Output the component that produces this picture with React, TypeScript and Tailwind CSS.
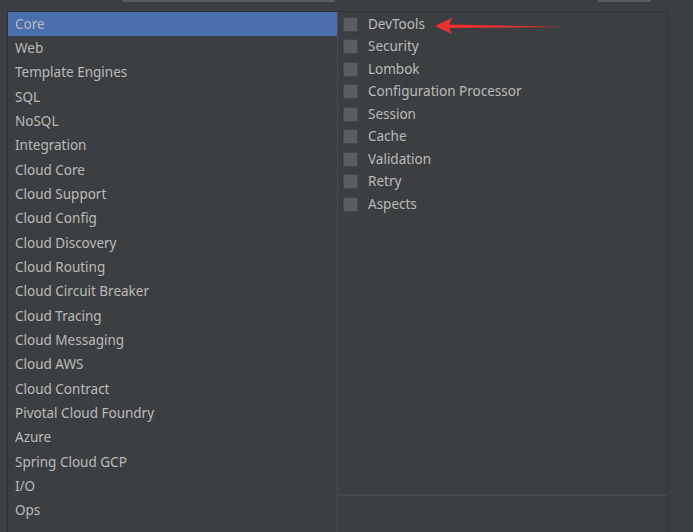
import React from "react";

const categories = [
  "Core",
  "Web",
  "Template Engines",
  "SQL",
  "NoSQL",
  "Integration",
  "Cloud Core",
  "Cloud Support",
  "Cloud Config",
  "Cloud Discovery",
  "Cloud Routing",
  "Cloud Circuit Breaker",
  "Cloud Tracing",
  "Cloud Messaging",
  "Cloud AWS",
  "Cloud Contract",
  "Pivotal Cloud Foundry",
  "Azure",
  "Spring Cloud GCP",
  "I/O",
  "Ops",
];

const deps = [
  "DevTools",
  "Security",
  "Lombok",
  "Configuration Processor",
  "Session",
  "Cache",
  "Validation",
  "Retry",
  "Aspects",
];

const App = () => {
  return (
    <main
      className="relative w-[693px] h-[532px] overflow-hidden bg-[#3c3f41] text-[#bbbbbb] text-[13.5px]"
      style={{ fontFamily: '"Noto Sans", "Open Sans", sans-serif' }}
    >
      {/* bottom edges of the controls above */}
      <div className="flex h-[11px]">
        <div className="ml-[122px] w-[213px] h-[2px] bg-[#5a5c5e]" />
        <div className="ml-[263px] w-[53px] h-[2px] bg-[#5a5c5e]" />
      </div>

      <div className="flex ml-[7px] h-[521px]">
        {/* categories */}
        <ul className="w-[330px] border-l border-t border-[#2e3032]">
          {categories.map((c, i) => (
            <li
              key={c}
              className={
                "h-[24.35px] pl-[7px] pb-[1px] flex items-center " +
                (i === 0 ? "bg-[#4b6eaf]" : "")
              }
            >
              {c}
            </li>
          ))}
        </ul>

        {/* dependencies */}
        <div className="w-[331px] flex flex-col border-l border-r border-t border-l-[#4a4d4f] border-r-[#313335] border-t-[#313335]">
          <div className="flex-1 pl-[5px] pt-[1px]">
            {deps.map((d) => (
              <div key={d} className="h-[22.5px] flex items-center gap-[10px]">
                <span className="w-[15px] h-[15px] rounded-[2px] bg-[#5b5e60] border border-[#46494b]" />
                <span className="-mt-[1px]">{d}</span>
              </div>
            ))}
          </div>
          <div className="h-[38px] border-t-2 border-[#46494b]" />
        </div>
      </div>

      {/* annotation arrow */}
      <svg
        className="absolute left-[430px] top-[16px]"
        width="140"
        height="20"
        viewBox="0 0 140 20"
      >
        <path d="M5 10 L22 2 L19 8.5 L135 11 L19 12 L22 18 Z" fill="#f03030" />
      </svg>
    </main>
  );
};

export default App;
